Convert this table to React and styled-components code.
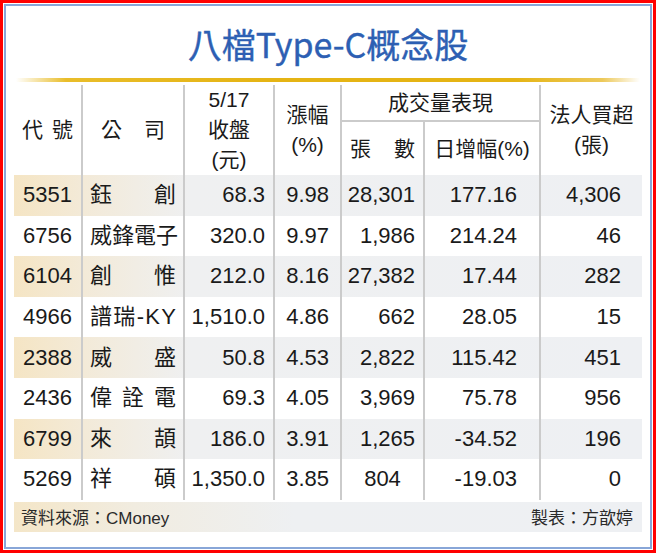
import React from "react"
import styled, { createGlobalStyle } from "styled-components"

const rows = [
  ["5351", "鈺創", "68.3", "9.98", "28,301", "177.16", "4,306"],
  ["6756", "威鋒電子", "320.0", "9.97", "1,986", "214.24", "46"],
  ["6104", "創惟", "212.0", "8.16", "27,382", "17.44", "282"],
  ["4966", "譜瑞-KY", "1,510.0", "4.86", "662", "28.05", "15"],
  ["2388", "威盛", "50.8", "4.53", "2,822", "115.42", "451"],
  ["2436", "偉詮電", "69.3", "4.05", "3,969", "75.78", "956"],
  ["6799", "來頡", "186.0", "3.91", "1,265", "-34.52", "196"],
  ["5269", "祥碩", "1,350.0", "3.85", "804", "-19.03", "0"],
]

// width, alignment and right padding of each column
const cols = [
  { w: 68, align: "center", pr: 0 },
  { w: 102, align: "left", pr: 7 },
  { w: 90, align: "right", pr: 8 },
  { w: 67, align: "right", pr: 11 },
  { w: 83, align: "right", pr: 8 },
  { w: 116, align: "right", pr: 22 },
  { w: 102, align: "right", pr: 21 },
]

function Spread({ text, pad }) {
  return (
    <SpreadBox $pad={pad}>
      {Array.from(text).map((c, i) => (
        <span key={i}>{c}</span>
      ))}
    </SpreadBox>
  )
}

export default function App() {
  return (
    <>
      <GlobalStyle />
      <Frame>
        <Inner>
          <Title>八檔Type-C概念股</Title>
          <GoldLine />
          <Table>
            <colgroup>
              {cols.map((c, i) => (
                <col key={i} style={{ width: c.w }} />
              ))}
            </colgroup>
            <thead>
              <tr>
                <Th rowSpan={2} $first>
                  <Spread text="代號" pad={8} />
                </Th>
                <Th rowSpan={2}>
                  <Spread text="公司" pad={18} />
                </Th>
                <Th rowSpan={2}>
                  5/17
                  <br />
                  收盤
                  <br />
                  (元)
                </Th>
                <Th rowSpan={2}>
                  漲幅
                  <br />
                  (%)
                </Th>
                <GroupTh colSpan={2}>成交量表現</GroupTh>
                <Th rowSpan={2}>
                  法人買超
                  <br />
                  (張)
                </Th>
              </tr>
              <tr>
                <SubTh>
                  <Spread text="張數" pad={8} />
                </SubTh>
                <SubTh>日增幅(%)</SubTh>
              </tr>
            </thead>
            <tbody>
              {rows.map((r, i) => (
                <Row key={r[0]} $shade={i % 2 === 0}>
                  {r.map((v, j) => {
                    if (j === 1)
                      return (
                        <Td key={j} $align="left" $pr={0}>
                          <Spread text={v} pad={7} />
                        </Td>
                      )
                    const centered = v === "804"
                    return (
                      <Td
                        key={j}
                        $first={j === 0}
                        $align={centered ? "center" : cols[j].align}
                        $pr={centered ? 0 : cols[j].pr}
                      >
                        {v}
                      </Td>
                    )
                  })}
                </Row>
              ))}
            </tbody>
          </Table>
          <Footer>
            <span>資料來源：CMoney</span>
            <span>製表：方歆婷</span>
          </Footer>
        </Inner>
      </Frame>
    </>
  )
}

const GlobalStyle = createGlobalStyle`
  body {
    margin: 0;
    background: #fff;
    font-family: "Liberation Sans", "Noto Sans CJK TC", sans-serif;
  }
`

const Frame = styled.div`
  width: 656px;
  height: 553px;
  box-sizing: border-box;
  border: 3px solid #ff0000;
  padding: 1px;
  background: #fff;
`

const Inner = styled.div`
  height: 100%;
  box-sizing: border-box;
  border: 2px solid #88a6d8;
  display: flex;
  flex-direction: column;
`

const Title = styled.div`
  padding-top: 18px;
  height: 40px;
  line-height: 40px;
  text-align: center;
  font-family: "Noto Sans CJK TC", sans-serif;
  font-weight: 400;
  font-size: 34px;
  color: #2d5fb3;
  -webkit-text-stroke: 0.4px #2d5fb3;
`

const GoldLine = styled.div`
  margin: 14px 10px 0;
  height: 4px;
  background: linear-gradient(
    to right,
    rgba(236, 190, 30, 0) 0%,
    #e9bd2a 8%,
    #e5b414 40%,
    #e5b414 80%,
    #edc95a 94%,
    rgba(236, 200, 90, 0) 100%
  );
`

const Table = styled.table`
  margin: 3px 8px 0;
  width: 628px;
  table-layout: fixed;
  border-collapse: collapse;
  border-spacing: 0;
  color: #1a1a1a;
`

const Th = styled.th`
  padding: 0;
  font-weight: normal;
  font-size: 21px;
  line-height: 30px;
  text-align: center;
  vertical-align: middle;
  border-left: ${(p) => (p.$first ? "none" : "2px solid #cbcbcb")};
`

const GroupTh = styled(Th)`
  height: 35px;
  border-bottom: 2px solid #cbcbcb;
  line-height: 32px;
`

const SubTh = styled(Th)`
  height: 53px;
`

const SpreadBox = styled.span`
  display: flex;
  justify-content: space-between;
  padding: 0 ${(p) => p.$pad}px;
`

const Row = styled.tr`
  height: 40.6px;
  background: ${(p) =>
    p.$shade
      ? "linear-gradient(to right, #f5e5c4 0px, #f3ead8 70px, #eff0f1 175px, #eef0f3 100%)"
      : "#fff"};
`

const Td = styled.td`
  padding: 0 ${(p) => p.$pr}px 0 0;
  font-size: 22px;
  line-height: 40px;
  text-align: ${(p) => p.$align};
  white-space: nowrap;
  border-left: ${(p) => (p.$first ? "none" : "2px solid #cbcbcb")};
`

const Footer = styled.div`
  margin: 2px 8px 0;
  height: 30px;
  display: flex;
  align-items: center;
  justify-content: space-between;
  padding: 0 9px 0 7px;
  font-size: 17px;
  color: #2a2a2a;
  background: linear-gradient(
    to right,
    #f4e6c8 0px,
    #f1ece0 120px,
    #eef0f2 280px,
    #eef0f3 100%
  );
`
